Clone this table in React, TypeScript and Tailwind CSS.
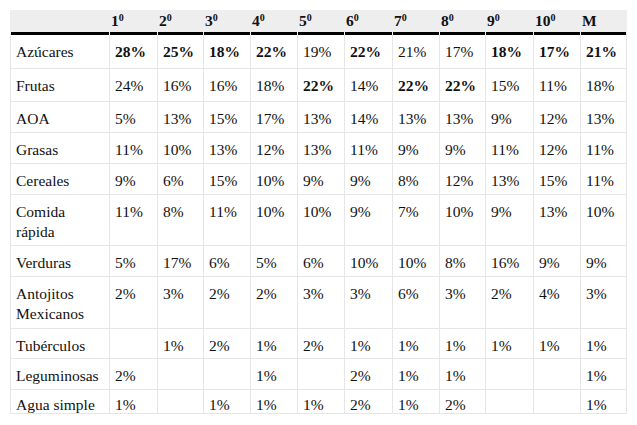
import React from "react";

type Cell = { v: string; b?: boolean };

const headers = ["1", "2", "3", "4", "5", "6", "7", "8", "9", "10"];

const p = (s: string, bolds: number[] = []): Cell[] =>
  s.split(",").map((x, i) => ({ v: x === "" ? "" : x + "%", b: bolds.includes(i) }));

const rows: { label: string[]; cells: Cell[]; last?: boolean }[] = [
  { label: ["Azúcares"], cells: p("28,25,18,22,19,22,21,17,18,17,21", [0, 1, 2, 3, 5, 8, 9, 10]) },
  { label: ["Frutas"], cells: p("24,16,16,18,22,14,22,22,15,11,18", [4, 6, 7]) },
  { label: ["AOA"], cells: p("5,13,15,17,13,14,13,13,9,12,13") },
  { label: ["Grasas"], cells: p("11,10,13,12,13,11,9,9,11,12,11") },
  { label: ["Cereales"], cells: p("9,6,15,10,9,9,8,12,13,15,11") },
  { label: ["Comida", "rápida"], cells: p("11,8,11,10,10,9,7,10,9,13,10") },
  { label: ["Verduras"], cells: p("5,17,6,5,6,10,10,8,16,9,9") },
  { label: ["Antojitos", "Mexicanos"], cells: p("2,3,2,2,3,3,6,3,2,4,3") },
  { label: ["Tubérculos"], cells: p(",1,2,1,2,1,1,1,1,1,1") },
  { label: ["Leguminosas"], cells: p("2,,,1,,2,1,1,,,1") },
  { label: ["Agua simple"], cells: p("1,,1,1,1,2,1,2,,,1"), last: true },
];

export default function App() {
  return (
    <div className="w-[637px] h-[425px] bg-white pt-[10px] pl-[10px] text-[#111] font-['Liberation_Serif',serif]">
      <div className="grid grid-cols-[100px_48px_46px_47px_47px_47px_48px_47px_46px_48px_47px_46px] grid-rows-[25px_34px_33px_31px_31px_31px_51px_31px_52px_30px_31px_24px] w-[617px] text-[15.5px] leading-[20px]">
        <div className="bg-[#eeeeee] border-l border-r border-[#eeeeee] shadow-[inset_0_-3px_0_#000]" />
        {headers.map((h) => (
          <div key={h} className="bg-[#eeeeee] border-r border-[#eeeeee] shadow-[inset_0_-3px_0_#000] pl-[1px] pb-[3px] flex items-center font-bold">
            <span>
              {h}
              <sup className="text-[10px]">0</sup>
            </span>
          </div>
        ))}
        <div className="bg-[#eeeeee] border-r border-[#eeeeee] shadow-[inset_0_-3px_0_#000] pl-[1px] pb-[3px] flex items-center font-bold">
          M
        </div>
        {rows.map((r, ri) => (
          <React.Fragment key={ri}>
            <div className={`border-l border-r border-b border-[#e6e6e6] pl-[5px] ${r.last ? "pt-[5px]" : "pt-[7px]"} overflow-hidden`}>
              {r.label.map((l, i) => (
                <div key={i}>{l}</div>
              ))}
            </div>
            {r.cells.map((c, ci) => (
              <div
                key={ci}
                className={`border-r border-b border-[#e6e6e6] pl-[5px] ${r.last ? "pt-[5px]" : "pt-[7px]"} ${c.b ? "font-bold" : ""} overflow-hidden`}
              >
                {c.v}
              </div>
            ))}
          </React.Fragment>
        ))}
      </div>
    </div>
  );
}
